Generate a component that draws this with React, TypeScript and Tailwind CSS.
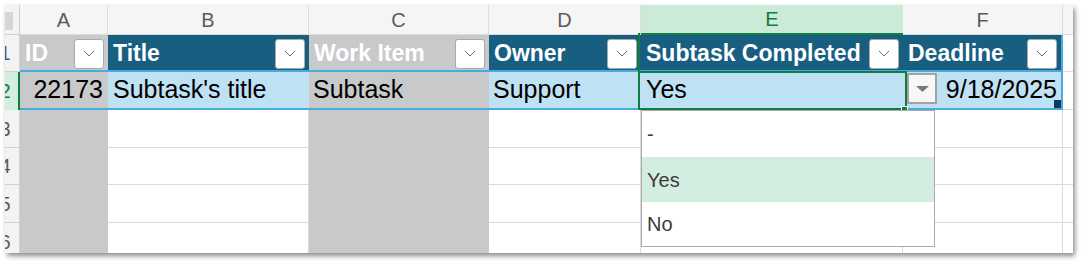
import React from "react";

const font = "font-['Liberation_Sans',Arial,sans-serif]";

function Chevron() {
  return (
    <svg width="12" height="7" viewBox="0 0 12 7" fill="none">
      <path d="M1 1 L6 6 L11 1" stroke="#6e6e6e" strokeWidth="1" />
    </svg>
  );
}

function FilterButton() {
  return (
    <div className="ml-auto mr-[4px] flex h-[30px] w-[30px] shrink-0 items-center justify-center rounded-[3px] border border-[#a9a9a9] bg-white">
      <Chevron />
    </div>
  );
}

function RowNum({ n, active }: { n: number; active?: boolean }) {
  return (
    <div
      className={
        active
          ? "flex w-[15px] shrink-0 items-center overflow-hidden border-r-2 border-[#107c41] bg-[#d3edde] text-[#107c41]"
          : "flex w-[15px] shrink-0 items-center overflow-hidden border-r border-b border-[#d0d0d0] bg-[#f3f3f3] text-[#5b5b5b]"
      }
    >
      <span className="-ml-[15px] w-[30px] shrink-0 text-center text-[20px]">{n}</span>
    </div>
  );
}

const headers = [
  { label: "ID", w: "w-[88px]", bg: "bg-[#c8c9cb]" },
  { label: "Title", w: "w-[201px]", bg: "bg-[#185e81]" },
  { label: "Work Item", w: "w-[180px]", bg: "bg-[#c8c9cb]" },
  { label: "Owner", w: "w-[152px]", bg: "bg-[#185e81]" },
  { label: "Subtask Completed", w: "w-[262px]", bg: "bg-[#185e81]" },
  { label: "Deadline", w: "w-[160px]", bg: "bg-[#185e81]" },
];

const letters = [
  { l: "A", w: "w-[88px]" },
  { l: "B", w: "w-[201px]" },
  { l: "C", w: "w-[180px]" },
  { l: "D", w: "w-[152px]" },
  { l: "E", w: "w-[262px]" },
  { l: "F", w: "w-[160px]" },
];

export default function App() {
  return (
    <div className={`h-[262px] w-[1082px] bg-white pl-[5px] pt-[5px] ${font}`}>
      <div className="relative h-[248px] w-[1068px] overflow-hidden bg-white shadow-[2px_3px_5px_rgba(0,0,0,0.45)]">
        {/* column letters */}
        <div className="flex h-[30px]">
          <div className="relative w-[15px] shrink-0 border-r border-b border-[#cfcfcf] bg-[#f3f3f3]">
            <div className="absolute bottom-[4px] left-0 h-[18px] w-[8px] bg-[#d6d6d6]" />
          </div>
          {letters.map((c) =>
            c.l === "E" ? (
              <div
                key={c.l}
                className={`${c.w} flex shrink-0 items-center justify-center border-b-2 border-[#107c41] bg-[#cbead7] text-[20px] text-[#107c41]`}
              >
                {c.l}
              </div>
            ) : (
              <div
                key={c.l}
                className={`${c.w} flex shrink-0 items-center justify-center border-r border-b border-[#dcdcdc] bg-[#f5f5f5] text-[20px] text-[#5b5b5b]`}
              >
                {c.l}
              </div>
            )
          )}
          <div className="flex-1 border-b border-[#dcdcdc] bg-[#f5f5f5]" />
        </div>

        {/* row 1: table headers */}
        <div className="flex h-[37px]">
          <RowNum n={1} />
          {headers.map((h, i) => (
            <div
              key={h.label}
              className={`${h.w} ${h.bg} flex shrink-0 items-center border-b-2 border-[#46abdf] pl-[5px] pt-[2px] text-[23px] font-bold text-white ${
                i === 5 ? "border-r-2" : ""
              }`}
            >
              <span className="whitespace-nowrap">{h.label}</span>
              <FilterButton />
            </div>
          ))}
          <div className="flex-1 border-b border-[#dadada]" />
        </div>

        {/* row 2: data */}
        <div className="flex h-[38px] text-[25px] text-black">
          <RowNum n={2} active />
          <div className="flex w-[88px] shrink-0 items-center justify-end border-b-2 border-[#46abdf] bg-[#c8c9cb] pr-[5px]">
            22173
          </div>
          <div className="flex w-[201px] shrink-0 items-center border-b-2 border-[#46abdf] bg-[#bfe1f4] pl-[5px]">
            Subtask's title
          </div>
          <div className="flex w-[180px] shrink-0 items-center border-b-2 border-[#46abdf] bg-[#c8c9cb] pl-[4px]">
            Subtask
          </div>
          <div className="flex w-[152px] shrink-0 items-center border-b-2 border-[#46abdf] bg-[#bfe1f4] pl-[4px]">
            Support
          </div>
          <div className="flex w-[262px] shrink-0 items-center border-b-2 border-[#46abdf] bg-[#bfe1f4] pl-[5px]">
            Yes
          </div>
          <div className="relative flex w-[160px] shrink-0 items-center border-r-2 border-b-2 border-[#46abdf] bg-[#bfe1f4] pr-[4px]">
            <div className="ml-[4px] mb-[4px] flex h-[31px] w-[30px] shrink-0 items-start justify-center border-2 border-[#a3a3a3] bg-[#f7f7f7] pt-[11px]">
              <svg width="13" height="6" viewBox="0 0 13 6">
                <path d="M0 0 H13 L6.5 6 Z" fill="#7a7a7a" />
              </svg>
            </div>
            <span className="ml-auto">9/18/2025</span>
            <div className="absolute right-0 bottom-0 h-[8px] w-[7px] bg-[#0f3a5c]" />
          </div>
          <div className="flex-1 border-b border-[#dadada]" />
        </div>

        {/* empty rows */}
        {[3, 4, 5, 6].map((n) => (
          <div key={n} className={n === 4 ? "flex h-[37px]" : "flex h-[38px]"}>
            <RowNum n={n} />
            <div className="w-[88px] shrink-0 bg-[#c8c9cb]" />
            <div className="w-[201px] shrink-0 border-r border-b border-[#dadada]" />
            <div className="w-[180px] shrink-0 bg-[#c8c9cb]" />
            <div className="w-[152px] shrink-0 border-r border-b border-[#dadada]" />
            <div className="w-[262px] shrink-0 border-r border-b border-[#dadada]" />
            <div className="w-[160px] shrink-0 border-r border-b border-[#dadada]" />
            <div className="flex-1 border-b border-[#dadada]" />
          </div>
        ))}

        {/* selection outline on E2 */}
        <div className="absolute left-[633px] top-[28px] h-[40px] w-[2px] bg-[#107c41]" />
        <div className="absolute left-[633px] top-[66px] h-[39px] w-[269px] border-2 border-[#107c41]" />
        <div className="absolute left-[896px] top-[101px] h-[7px] w-[7px] border border-white bg-[#107c41]" />

        {/* validation dropdown */}
        <div className="absolute left-[636px] top-[105px] flex h-[137px] w-[294px] flex-col border border-[#ababab] bg-white text-[20px] text-[#3b3b3b]">
          <div className="flex h-[46px] items-center pl-[5px]">-</div>
          <div className="flex h-[45px] items-center bg-[#d3eee0] pl-[5px]">Yes</div>
          <div className="flex h-[44px] items-center pl-[5px]">No</div>
        </div>
      </div>
    </div>
  );
}
